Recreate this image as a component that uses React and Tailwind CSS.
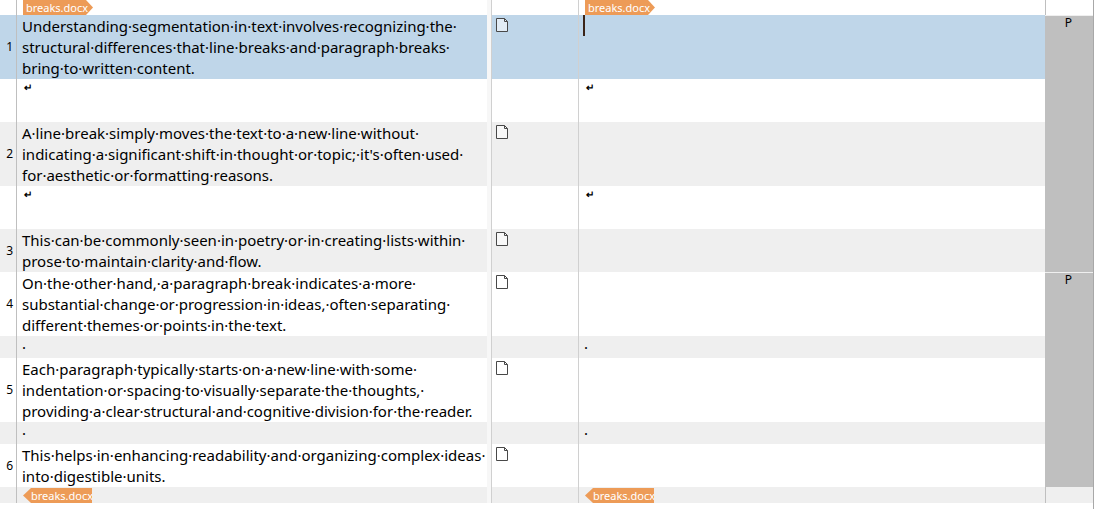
import React from 'react';
import clsx from 'clsx';

const rows = [
  {
    id: 1,
    active: true,
    lines: [
      'Understanding segmentation in text involves recognizing the ',
      'structural differences that line breaks and paragraph breaks ',
      'bring to written content.',
    ],
    paragraph: { span: 5 },
  },
  { mark: '↵', tall: true },
  {
    id: 2,
    shaded: true,
    lines: [
      'A line break simply moves the text to a new line without ',
      "indicating a significant shift in thought or topic; it's often used ",
      'for aesthetic or formatting reasons.',
    ],
  },
  { mark: '↵', tall: true },
  {
    id: 3,
    shaded: true,
    lines: [
      'This can be commonly seen in poetry or in creating lists within ',
      'prose to maintain clarity and flow.',
    ],
  },
  {
    id: 4,
    lines: [
      'On the other hand, a paragraph break indicates a more ',
      'substantial change or progression in ideas, often separating ',
      'different themes or points in the text.',
    ],
    paragraph: { span: 5 },
  },
  { mark: '·', shaded: true },
  {
    id: 5,
    lines: [
      'Each paragraph typically starts on a new line with some ',
      'indentation or spacing to visually separate the thoughts, ',
      'providing a clear structural and cognitive division for the reader.',
    ],
  },
  { mark: '·', shaded: true },
  {
    id: 6,
    lines: [
      'This helps in enhancing readability and organizing complex ideas ',
      'into digestible units.',
    ],
  },
];

// spaces are shown as middle dots, like any editor with whitespace turned on
const showSpaces = (text) => text.replace(/ /g, '·');

function FileTag({ closing }) {
  return (
    <span
      className={clsx(
        'block h-[15px] bg-[#ed9b57] text-[11px] leading-[15px] text-white',
        closing
          ? 'w-[69px] pl-2 [clip-path:polygon(0_50%,8px_0,100%_0,100%_100%,8px_100%)]'
          : 'w-[70px] pl-[3px] [clip-path:polygon(0_0,63px_0,100%_50%,63px_100%,0_100%)]'
      )}
    >
      breaks.docx
    </span>
  );
}

function PageIcon() {
  return (
    <svg width="12" height="14" viewBox="0 0 12 14" role="img" aria-label="Not translated">
      <path d="M.5.5h8l3 3v10H.5z" fill="#fff" fillOpacity=".55" stroke="#484848" />
      <path d="M8.5.5v3h3" fill="none" stroke="#484848" />
    </svg>
  );
}

function Gutter() {
  return <td className="bg-[#f7f7f7]" />;
}

function TagRow({ closing }) {
  return (
    <tr className={closing ? 'h-4 bg-[#efefef]' : 'h-[15px]'}>
      <td className="border-r border-[#bfbfbf]" />
      <td className="pl-[6px] align-bottom"><FileTag closing={closing} /></td>
      <Gutter />
      <td className="border-x border-[#d0d0d0]" />
      <td className="pl-[6px] align-bottom"><FileTag closing={closing} /></td>
      <td className="border-l border-[#bfbfbf]" />
    </tr>
  );
}

function Mark({ children }) {
  return (
    <span
      className={clsx(
        'block',
        children === '↵' ? 'pl-[2px] text-[10px] leading-[15px] font-bold' : 'leading-[21px]'
      )}
    >
      {children}
    </span>
  );
}

function Row({ row }) {
  const { id, lines, mark, active, shaded, tall, paragraph } = row;

  return (
    <tr
      className={clsx(
        active && 'bg-[#bfd6e9]',
        shaded && 'bg-[#efefef]',
        mark && (tall ? 'h-[43px]' : 'h-[22px]')
      )}
    >
      <td className="border-r border-[#bfbfbf] pr-[3px] text-right align-middle text-xs">{id}</td>
      <td className="pt-px pl-[5px] align-top whitespace-nowrap">
        {mark ? <Mark>{mark}</Mark> : lines.map((line) => (
          <span key={line} className="block leading-[21px]">{showSpaces(line)}</span>
        ))}
      </td>
      <Gutter />
      <td className="border-x border-[#d0d0d0] pt-[3px] pl-1 align-top">{id && <PageIcon />}</td>
      <td className={clsx('align-top', mark ? 'pt-px pl-[5px]' : 'pl-1')}>
        {mark ? <Mark>{mark}</Mark> : (
          <div className="flex">
            {active && <span className="h-[21px] w-[2px] bg-[#3a2418]" />}
            <textarea
              aria-label={`Translation of segment ${id}`}
              rows={lines.length}
              className="block min-w-0 flex-1 resize-none overflow-hidden leading-[21px] outline-none"
            />
          </div>
        )}
      </td>
      {paragraph && (
        <td
          rowSpan={paragraph.span}
          className="border-t border-[#efefef] bg-[#bfbfbf] pr-px text-center align-top text-xs leading-[14px]"
        >
          P
        </td>
      )}
    </tr>
  );
}

export default function App() {
  return (
    <div className="min-h-screen border-r border-[#a8a8a8] bg-white font-['Noto_Sans',sans-serif] text-[15px] text-black">
      <table className="w-full table-fixed border-separate border-spacing-0">
        <colgroup>
          <col className="w-[17px]" />
          <col className="w-[43%]" />
          <col className="w-1" />
          <col className="w-[88px]" />
          <col />
          <col className="w-12" />
        </colgroup>
        <tbody>
          <TagRow />
          {rows.map((row, i) => (
            <Row key={i} row={row} />
          ))}
          <TagRow closing />
        </tbody>
      </table>
    </div>
  );
}
